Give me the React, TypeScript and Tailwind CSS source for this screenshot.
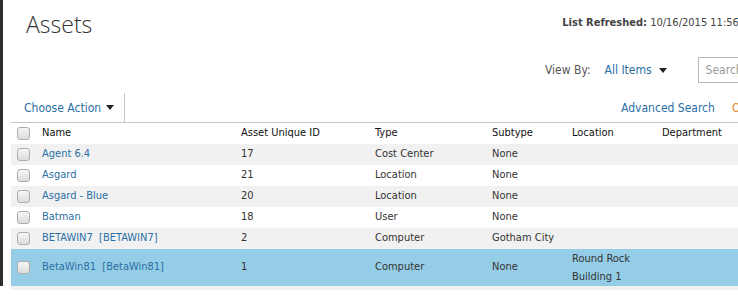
import { ChevronDown } from 'lucide-react';

type Row = {
  name: string;
  id: string;
  type: string;
  subtype: string;
  location?: string[];
  selected?: boolean;
};

const rows: Row[] = [
  { name: 'Agent 6.4', id: '17', type: 'Cost Center', subtype: 'None' },
  { name: 'Asgard', id: '21', type: 'Location', subtype: 'None' },
  { name: 'Asgard - Blue', id: '20', type: 'Location', subtype: 'None' },
  { name: 'Batman', id: '18', type: 'User', subtype: 'None' },
  { name: 'BETAWIN7\u00a0\u00a0[BETAWIN7]', id: '2', type: 'Computer', subtype: 'Gotham City' },
  {
    name: 'BetaWin81\u00a0\u00a0[BetaWin81]',
    id: '1',
    type: 'Computer',
    subtype: 'None',
    location: ['Round Rock', 'Building 1'],
    selected: true,
  },
];

const cols = 'grid grid-cols-[31px_199px_134px_117px_80px_90px_120px]';

function Check() {
  return (
    <span className="block w-[13px] h-[13px] rounded-[3px] border border-[#adadad] bg-gradient-to-b from-[#f6f6f6] to-[#dcdcdc]" />
  );
}

function Caret() {
  return (
    <svg width="8" height="5" viewBox="0 0 8 5" className="inline-block">
      <path d="M0 0h8L4 5z" fill="#222" />
    </svg>
  );
}

export default function App() {
  return (
    <div className="w-[738px] h-[299px] overflow-hidden bg-white flex text-[11px] text-[#333] font-['DejaVu_Sans_Condensed','DejaVu_Sans',sans-serif]">
      <div className="w-[3px] h-[286px] shrink-0 bg-[#2e2e2e]" />

      <div className="w-[860px] shrink-0">
        {/* title bar */}
        <div className="flex items-start h-[51px]">
          <h1 className="ml-[23px] mt-[8px] text-[23px] leading-[32px] font-light text-[#333] font-['Open_Sans',sans-serif]">
            Assets
          </h1>
          <div className="ml-[470px] mt-[15px] text-[11px] text-[#444] whitespace-nowrap">
            <span className="font-bold">List Refreshed:</span> 10/16/2015 11:56 AM
          </div>
        </div>

        {/* view by */}
        <div className="flex items-center h-[38px]">
          <span className="ml-[542px] text-[12px] text-[#555]">View By:</span>
          <span className="ml-[14px] text-[12px] text-[#2a6fa5]">All Items</span>
          <span className="ml-[7px] mt-[1px]">
            <Caret />
          </span>
          <div className="ml-[31px] w-[90px] h-[26px] border border-[#b8b8b8] flex items-center pl-[7px] text-[12px] text-[#999]">
            Search
          </div>
        </div>

        {/* action bar */}
        <div className="ml-[8px] flex items-stretch h-[34px] border-b border-[#c6c6c6]">
          <div className="flex items-center pl-[13px] pr-[10px] border-r border-[#c6c6c6] mt-[4px] text-[12px] text-[#2a6fa5] gap-[5px]">
            Choose Action
            <Caret />
          </div>
          <span className="ml-[496px] self-center mt-[4px] text-[12px] text-[#2a6fa5]">Advanced Search</span>
          <span className="ml-[17px] self-center mt-[4px] text-[12px] text-[#e08a2c]">Options</span>
        </div>

        {/* table */}
        <div className="ml-[8px]">
          <div className={`${cols} h-[21px] items-center text-[#111]`}>
            <div className="pl-[6px]">
              <Check />
            </div>
            <div>Name</div>
            <div>Asset Unique ID</div>
            <div>Type</div>
            <div>Subtype</div>
            <div>Location</div>
            <div>Department</div>
          </div>
          {rows.map((r, i) => (
            <div
              key={i}
              className={`${cols} items-center ${r.location ? 'h-[37px]' : 'h-[21px]'} ${
                r.selected ? 'bg-[#95cde6]' : i % 2 === 0 ? 'bg-[#f1f1f1]' : 'bg-white'
              }`}
            >
              <div className="pl-[6px]">
                <Check />
              </div>
              <div className="text-[#2a6fa5]">{r.name}</div>
              <div>{r.id}</div>
              <div>{r.type}</div>
              <div>{r.subtype}</div>
              <div className="leading-[18px]">
                {r.location?.map((l) => (
                  <div key={l}>{l}</div>
                ))}
              </div>
              <div />
            </div>
          ))}
          <div className="h-[4px] bg-[#f1f1f1]" />
        </div>
      </div>
    </div>
  );
}
